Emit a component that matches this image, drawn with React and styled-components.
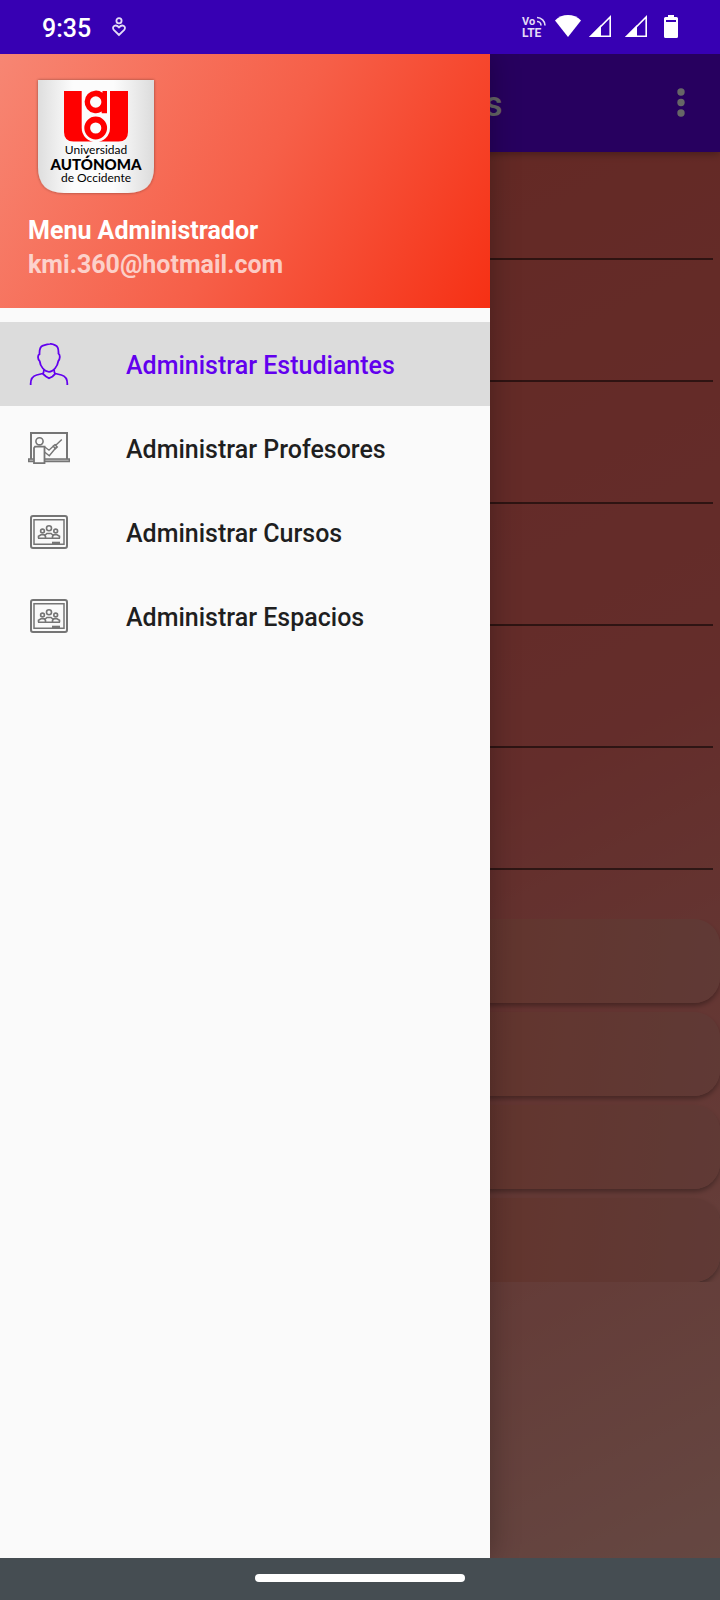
import React from 'react';
import styled, { createGlobalStyle } from 'styled-components';

const GlobalStyle = createGlobalStyle`
  *, *::before, *::after { box-sizing: border-box; }
  body { margin: 0; background: #fafafa; font-family: Roboto, sans-serif; }
  button, input { font: inherit; border: 0; margin: 0; }
  svg { display: block; flex: none; }
`;

const Screen = styled.div`
  display: flex;
  flex-direction: column;
  min-height: 100vh;
  overflow: hidden;
`;

const StatusBar = styled.header`
  display: flex;
  align-items: center;
  justify-content: space-between;
  height: 54px;
  padding: 0 42px 2px;
  background: #3700b3;
  color: #fff;
`;

const StatusGroup = styled.div`
  display: flex;
  align-items: center;
  gap: ${(p) => p.$gap}px;
`;

const Clock = styled.time`
  padding-top: 6px;
  font-size: 25px;
  font-weight: 500;
  line-height: 30px;
`;

const Body = styled.div`
  position: relative;
  display: flex;
  flex: 1;
  flex-direction: column;
  overflow: hidden;
`;

const AppBar = styled.div`
  position: relative;
  display: flex;
  align-items: center;
  justify-content: space-between;
  height: 98px;
  padding: 0 24px 0 126px;
  background: #6200ee;
  color: #fff;
  box-shadow: 0 2px 8px rgba(0, 0, 0, 0.3);
`;

const Title = styled.h1`
  margin: 0;
  padding-top: 4px;
  font-size: 35px;
  font-weight: 500;
  line-height: 42px;
  white-space: nowrap;
`;

const IconButton = styled.button`
  display: flex;
  align-items: center;
  justify-content: center;
  width: 30px;
  height: 48px;
  padding: 0;
  background: none;
  color: inherit;
`;

const Page = styled.main`
  display: flex;
  flex: 1;
  flex-direction: column;
  gap: 49px;
  background: linear-gradient(153deg, #fa6458 0%, #fb716b 50%, #fcb2a5 100%);
`;

const Fields = styled.form`
  display: flex;
  flex-direction: column;
  gap: 14px;
  padding: 0 7px;
`;

const Field = styled.input`
  width: 100%;
  height: 108px;
  padding: 0 8px;
  background: none;
  border-bottom: 2px solid rgba(0, 0, 0, 0.54);
  font-size: 32px;
  outline: none;
`;

const Actions = styled.div`
  display: flex;
  flex-direction: column;
  gap: 9px;
  overflow: hidden;
`;

const ActionButton = styled.button`
  height: 84px;
  border-radius: 26px;
  background: linear-gradient(97deg, #fa7864 0%, #f78573 65%, #ef9186 100%);
  box-shadow: 0 3px 5px rgba(0, 0, 0, 0.3);
`;

const Scrim = styled.div`
  position: absolute;
  inset: 0;
  background: rgba(0, 0, 0, 0.6);
`;

const Drawer = styled.aside`
  position: absolute;
  top: 0;
  bottom: 0;
  left: 0;
  width: min(490px, 68.1%);
  background: #fafafa;
  box-shadow: 0 0 28px rgba(0, 0, 0, 0.3);
`;

const DrawerHeader = styled.div`
  display: flex;
  flex-direction: column;
  gap: 21px;
  height: 254px;
  padding: 26px 28px 0;
  background: linear-gradient(120deg, #f78673 0%, #f65f48 52%, #f63014 100%);
`;

const LogoSlot = styled.div`
  padding-left: 10px;
`;

const HeaderLine = styled.div`
  color: ${(p) => (p.$muted ? 'rgba(255, 255, 255, 0.7)' : '#fff')};
  font-size: 25px;
  font-weight: 700;
  line-height: 34px;
`;

const Menu = styled.nav`
  display: flex;
  flex-direction: column;
  padding-top: 14px;
`;

const MenuLink = styled.a`
  display: flex;
  align-items: center;
  gap: 56px;
  height: 84px;
  padding: 0 28px;
  background: ${(p) => (p.$active ? '#dcdcdc' : 'transparent')};
  color: ${(p) => (p.$active ? '#6200ee' : '#1f1f1f')};
  font-size: 25px;
  font-weight: 500;
  text-decoration: none;
  white-space: nowrap;

  svg { color: ${(p) => (p.$active ? '#6200ee' : '#757575')}; }
`;

const MenuLabel = styled.span`
  padding-top: 2px;
`;

const NavBar = styled.footer`
  display: flex;
  justify-content: center;
  height: 42px;
  padding-top: 16px;
  background: #454d52;
`;

const HomePill = styled.div`
  width: 210px;
  height: 8px;
  border-radius: 4px;
  background: #fff;
`;

const CareIcon = () => (
  <svg width="16" height="22" viewBox="0 -2 16 22" fill="none" stroke="#e4dbf6" strokeWidth="1.8">
    <circle cx="8" cy="3.7" r="2.6" />
    <path d="M8 18 2.8 12.9C.2 9.8 4.6 6.5 8 10.4c3.4-3.9 7.8-.6 5.2 2.5Z" />
  </svg>
);

const VolteIcon = () => (
  <svg width="26" height="30" viewBox="0 0 26 30" fill="#e4dbf6" fontFamily="Roboto, sans-serif" fontWeight="700">
    <text x="1" y="14" fontSize="11">Vo</text>
    <text x="1" y="26" fontSize="12">LTE</text>
    <path d="M16 10.500a4 4 0 0 1 4 4M16 6.500a8 8 0 0 1 8 8" fill="none" stroke="#e4dbf6" strokeWidth="1.600" />
  </svg>
);

const WifiIcon = () => (
  <svg width="26" height="22" viewBox="0 0 26 22" fill="#fff">
    <path d="M0 5.500C7-1.800 19-1.800 26 5.500L13 22Z" />
  </svg>
);

const SignalIcon = () => (
  <svg width="22" height="22" viewBox="0 0 22 22">
    <path d="M2 21.200 21.200 2v19.200Z" fill="none" stroke="#fff" strokeWidth="1.600" />
    <path d="M0 22 12 10v12Z" fill="#fff" />
  </svg>
);

const BatteryIcon = () => (
  <svg width="14" height="23" viewBox="0 0 14 23">
    <path d="M4 0h6v2h2.500Q14 2 14 3.500v18Q14 23 12.500 23h-11Q0 23 0 21.500v-18Q0 2 1.500 2H4Z" fill="#fff" />
    <path d="M2 5h10v2H2Z" fill="#3700b3" />
  </svg>
);

const MoreIcon = () => (
  <svg width="8" height="30" viewBox="0 0 8 30" fill="currentColor">
    <circle cx="4" cy="4" r="3.700" />
    <circle cx="4" cy="14.500" r="3.700" />
    <circle cx="4" cy="25" r="3.700" />
  </svg>
);

const UniversityLogo = () => (
  <svg width="116" height="113" viewBox="0 0 116 113" overflow="visible">
    <defs>
      <linearGradient id="shield" x1="0" x2="1" y1="0" y2="0">
        <stop offset="0" stopColor="#dedede" />
        <stop offset="0.3" stopColor="#fcfcfc" />
        <stop offset="0.65" stopColor="#fcfcfc" />
        <stop offset="1" stopColor="#dcdcdc" />
      </linearGradient>
      <filter id="shade" x="-10%" y="-10%" width="120%" height="120%">
        <feDropShadow dx="0" dy="0" stdDeviation="1.500" floodOpacity="0.4" />
      </filter>
    </defs>
    <path d="M0 0h116v87q0 26-26 26H26Q0 113 0 87Z" fill="url(#shield)" filter="url(#shade)" />
    <path d="M26 11h64v41q0 9.500-9.500 9.500h-45Q26 61.500 26 52Z" fill="#f00" />
    <path d="M43.700 10.500H72V48a14.150 14.150 0 0 1-28.300 0Z" fill="#fcfcfc" />
    <path fillRule="evenodd" d="M64.500 11H69v22.300h-5.300v-1.700A11.300 11.300 0 1 1 64.500 12.700ZM57.700 16.300a5.700 5.700 0 1 0 0 11.400 5.700 5.700 0 0 0 0-11.400Z" fill="#f00" />
    <circle cx="57.700" cy="48" r="8.500" fill="none" stroke="#f00" strokeWidth="5.800" />
    <g fill="#000" textAnchor="middle" fontFamily="Lato, sans-serif">
      <text x="58" y="74" fontSize="12">Universidad</text>
      <text x="58" y="90" fontSize="15" fontWeight="900">AUTÓNOMA</text>
      <text x="58" y="102" fontSize="12">de Occidente</text>
    </g>
  </svg>
);

const StudentIcon = () => (
  <svg width="42" height="42" viewBox="0 0 42 42" fill="none" stroke="currentColor" strokeWidth="1.800">
    <path d="M22 .9c-3 .2-5 1-7.200 1.700-2.800 1-3.500 3-3.300 8.500-2 1-2 5 .2 7 .5 5.500 5 10.700 9.300 10.700s8.500-5.200 9.300-10.700c1.700-2 2.200-6 .2-7.500.2-5-.5-7.300-3-8.200C25.700 1.500 24 .7 22 .9Z" />
    <path d="M2.700 42c-.3-5 .8-8.700 6-10l6-1.500c1-.5 1.200-1.800 1.200-3.500M39.300 42c.3-5-.8-8.700-6-10l-6-1.500c-1-.5-1.200-1.800-1.200-3.500M14.500 30.500l3.500 3 3 1.700 3.500-1.700 3-3" />
  </svg>
);

const TeacherIcon = () => (
  <svg width="42" height="42" viewBox="0 0 42 42" fill="none" stroke="currentColor" strokeWidth="1.400">
    <path d="M3 32V6h36v26" strokeWidth="2" />
    <path d="M.7 32h40.600v2.500H.7Z" fill="#bbb" strokeWidth="1.400" />
    <circle cx="11.500" cy="14.300" r="3.600" strokeWidth="1.600" />
    <path d="M7 19.700h9.500v16.500H6V21Z" fill="#fafafa" strokeWidth="1.800" />
    <path d="m16.500 19.700 4.500 3.500 5-4.700M16.500 25l4.800 3.800 7.200-8.800M25.300 19l2 3 2-2-2.300-2.300ZM27.500 18.500l6.300-6" />
  </svg>
);

const ClassIcon = () => (
  <svg width="42" height="42" viewBox="0 0 42 42" fill="none" stroke="currentColor" strokeWidth="1.600">
    <rect x="3" y="5" width="36" height="32" rx="2" strokeWidth="2" />
    <path d="M6 8.800h30v24.500H6Z" strokeWidth="1.500" />
    <circle cx="21" cy="17.300" r="2.500" />
    <circle cx="14.500" cy="20" r="1.900" />
    <circle cx="27.700" cy="20" r="1.900" />
    <path d="M10.500 27.300v-2l2.500-1.500h3l1.500 1.500v2M31.500 27.300v-2L29 23.800h-3l-1.500 1.500v2M16 25l3-2.500h4l3 2.500M10 27.300h22" />
    <path d="M24 30.700h8v2.600h-8Z" fill="currentColor" stroke="none" />
  </svg>
);

const fields = ['Nombre', 'Apellido', 'Código', 'Correo', 'Teléfono', 'Programa'];
const actions = ['Crear', 'Buscar', 'Actualizar', 'Eliminar'];
const menuItems = [
  { label: 'Administrar Estudiantes', Icon: StudentIcon, active: true },
  { label: 'Administrar Profesores', Icon: TeacherIcon },
  { label: 'Administrar Cursos', Icon: ClassIcon },
  { label: 'Administrar Espacios', Icon: ClassIcon },
];

export default function App() {
  return (
    <Screen>
      <GlobalStyle />
      <StatusBar>
        <StatusGroup $gap={20}>
          <Clock>9:35</Clock>
          <CareIcon />
        </StatusGroup>
        <StatusGroup $gap={17}>
          <StatusGroup $gap={14}>
            <StatusGroup $gap={8}>
              <VolteIcon />
              <WifiIcon />
              <SignalIcon />
            </StatusGroup>
            <SignalIcon />
          </StatusGroup>
          <BatteryIcon />
        </StatusGroup>
      </StatusBar>
      <Body>
        <AppBar>
          <Title>Administrar Estudiantes</Title>
          <IconButton type="button" aria-label="Más opciones">
            <MoreIcon />
          </IconButton>
        </AppBar>
        <Page>
          <Fields>
            {fields.map((name) => (
              <Field key={name} aria-label={name} />
            ))}
          </Fields>
          <Actions>
            {actions.map((name) => (
              <ActionButton key={name} type="button" aria-label={name} />
            ))}
          </Actions>
        </Page>
        <Scrim />
        <Drawer>
          <DrawerHeader>
            <LogoSlot>
              <UniversityLogo />
            </LogoSlot>
            <div>
              <HeaderLine>Menu Administrador</HeaderLine>
              <HeaderLine $muted>kmi.360@hotmail.com</HeaderLine>
            </div>
          </DrawerHeader>
          <Menu>
            {menuItems.map(({ label, Icon, active }) => (
              <MenuLink key={label} href="#" $active={active}>
                <Icon />
                <MenuLabel>{label}</MenuLabel>
              </MenuLink>
            ))}
          </Menu>
        </Drawer>
      </Body>
      <NavBar>
        <HomePill />
      </NavBar>
    </Screen>
  );
}
